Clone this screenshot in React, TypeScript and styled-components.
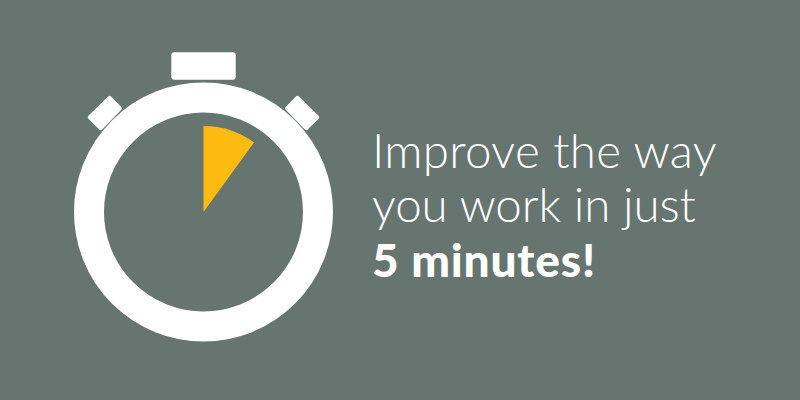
import styled, { createGlobalStyle } from "styled-components";

const GlobalStyle = createGlobalStyle`
  html, body {
    margin: 0;
    padding: 0;
    background: #66756f;
  }
`;

const Banner = styled.div`
  width: 800px;
  height: 400px;
  display: flex;
  align-items: flex-start;
  padding: 50px 0 0 70px;
  box-sizing: border-box;
  background: #66756f;
  overflow: hidden;
`;

const Watch = styled.svg`
  width: 270px;
  height: 300px;
  flex: none;
  display: block;
`;

const Headline = styled.h1`
  margin: 73px 0 0 32px;
  color: #fff;
  font-family: "Lato", "Liberation Sans", sans-serif;
  font-size: 47.5px;
  font-weight: 300;
  line-height: 54px;
  white-space: nowrap;
`;

const Line = styled.span<{ $spacing: number }>`
  display: block;
  letter-spacing: ${(props) => props.$spacing}px;
`;

const Strong = styled.strong`
  display: block;
  margin-top: 2px;
  font-weight: 900;
  font-size: 46px;
  letter-spacing: 0.8px;
`;

function Stopwatch() {
  // drawn in page coordinates, shifted by the viewBox origin
  return (
    <Watch viewBox="70 50 270 300">
      <rect x="171.3" y="52.3" width="64.4" height="27.4" rx="3" fill="#fff" />
      <path
        d="M109.7 97.8 L119.9 108.3 L100.7 128.2 L89.8 117.3 Z"
        fill="#fff"
        stroke="#fff"
        strokeWidth="4"
        strokeLinejoin="round"
      />
      <path
        d="M297.3 97.8 L287.1 108.3 L306.3 128.2 L317.2 117.3 Z"
        fill="#fff"
        stroke="#fff"
        strokeWidth="4"
        strokeLinejoin="round"
      />
      <circle cx="203.5" cy="212" r="114.5" fill="none" stroke="#fff" strokeWidth="30" />
      <path d="M203.5 212 V126 A86 86 0 0 1 254 142.4 Z" fill="#fdbb11" />
    </Watch>
  );
}

export default function App() {
  return (
    <>
      <GlobalStyle />
      <Banner>
        <Stopwatch />
        <Headline>
          <Line $spacing={0.3}>Improve the way</Line>
          <Line $spacing={-0.1}>you work in just</Line>
          <Strong>5 minutes!</Strong>
        </Headline>
      </Banner>
    </>
  );
}
